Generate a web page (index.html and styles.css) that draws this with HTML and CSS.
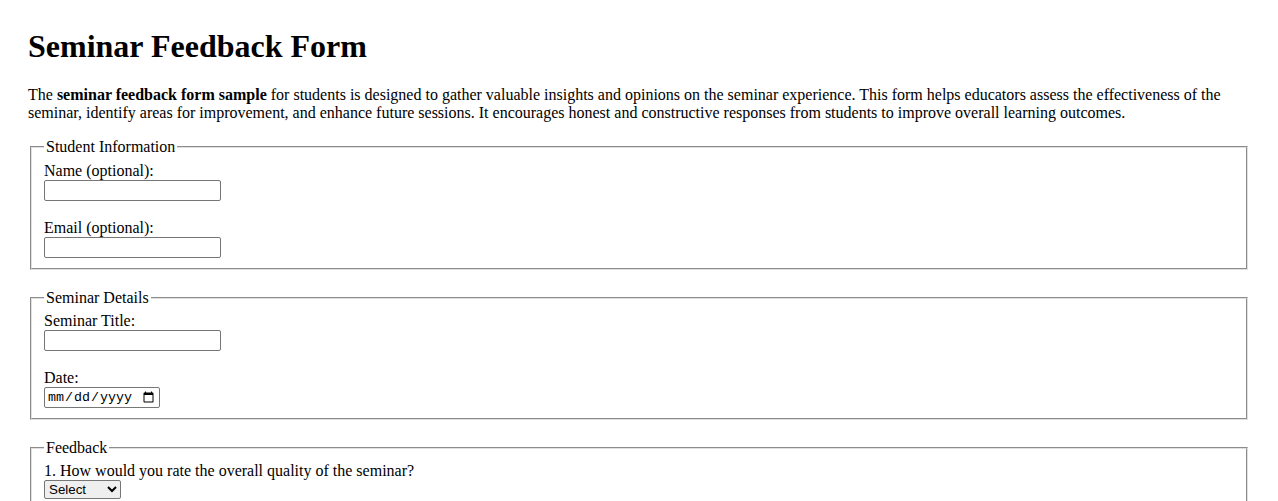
FILE: index.html
```html
<!DOCTYPE html>
<html lang="en">
<head>
<meta charset="utf-8">
<title>Seminar Feedback Form</title>
<link rel="stylesheet" href="styles.css">
</head>
<body class="page">
<h1 class="title">Seminar Feedback Form</h1>
<p class="intro">The <strong>seminar feedback form sample</strong> for students is designed to gather valuable insights and opinions on the seminar experience. This form helps educators assess the effectiveness of the seminar, identify areas for improvement, and enhance future sessions. It encourages honest and constructive responses from students to improve overall learning outcomes.</p>
<form class="form">
<fieldset class="group">
<legend class="group-title">Student Information</legend>
<label for="name">Name (optional):</label><br>
<input class="text-input" type="text" id="name" name="name"><br><br>
<label for="email">Email (optional):</label><br>
<input class="text-input" type="email" id="email" name="email">
</fieldset>
<fieldset class="group">
<legend class="group-title">Seminar Details</legend>
<label for="title">Seminar Title:</label><br>
<input class="text-input" type="text" id="title" name="title"><br><br>
<label for="date">Date:</label><br>
<input class="date-input" type="date" id="date" name="date">
</fieldset>
<fieldset class="group">
<legend class="group-title">Feedback</legend>
<label for="quality">1. How would you rate the overall quality of the seminar?</label><br>
<select class="select-input" id="quality" name="quality">
<option>Select</option>
<option>Excellent</option>
<option>Good</option>
<option>Average</option>
<option>Poor</option>
</select><br><br>
<label for="content">2. How relevant was the content to your studies?</label><br>
<select class="select-input" id="content" name="content">
<option>Select</option>
<option>Excellent</option>
<option>Good</option>
<option>Average</option>
<option>Poor</option>
</select>
</fieldset>
</form>
</body>
</html>
```
FILE: styles.css
```css
.page {
  margin: 8px;
  padding: 20px;
  font-family: "Liberation Serif", "Times New Roman", serif;
  font-size: 16px;
  color: #000;
  background: #fff;
}
.title {
  font-size: 32px;
  font-weight: bold;
  margin: 0 0 21.44px 0;
}
.intro {
  margin: 0 0 16px 0;
}
.form {
  margin: 0;
}
.group {
  margin: 0 2px 19px 2px;
  padding: 5.6px 12px 9.6px 12px;
  border: 2px groove #e0e0e0;
}
.group-title {
  padding: 0 2px;
}
.text-input {
  box-sizing: border-box;
  width: 177px;
  height: 21px;
  font-family: "Liberation Sans", Arial, sans-serif;
  font-size: 13.33px;
  border: 1px solid #767676;
  border-radius: 2px;
  padding: 1px 2px;
}
.date-input {
  box-sizing: border-box;
  width: 116px;
  height: 21px;
  font-family: "Liberation Mono", monospace;
  font-size: 13.33px;
  border: 1px solid #767676;
  border-radius: 2px;
  padding: 1px 2px;
}
.select-input {
  box-sizing: border-box;
  width: 77px;
  height: 19px;
  font-family: "Liberation Sans", Arial, sans-serif;
  font-size: 13.33px;
  border: 1px solid #767676;
  border-radius: 2px;
}
```
